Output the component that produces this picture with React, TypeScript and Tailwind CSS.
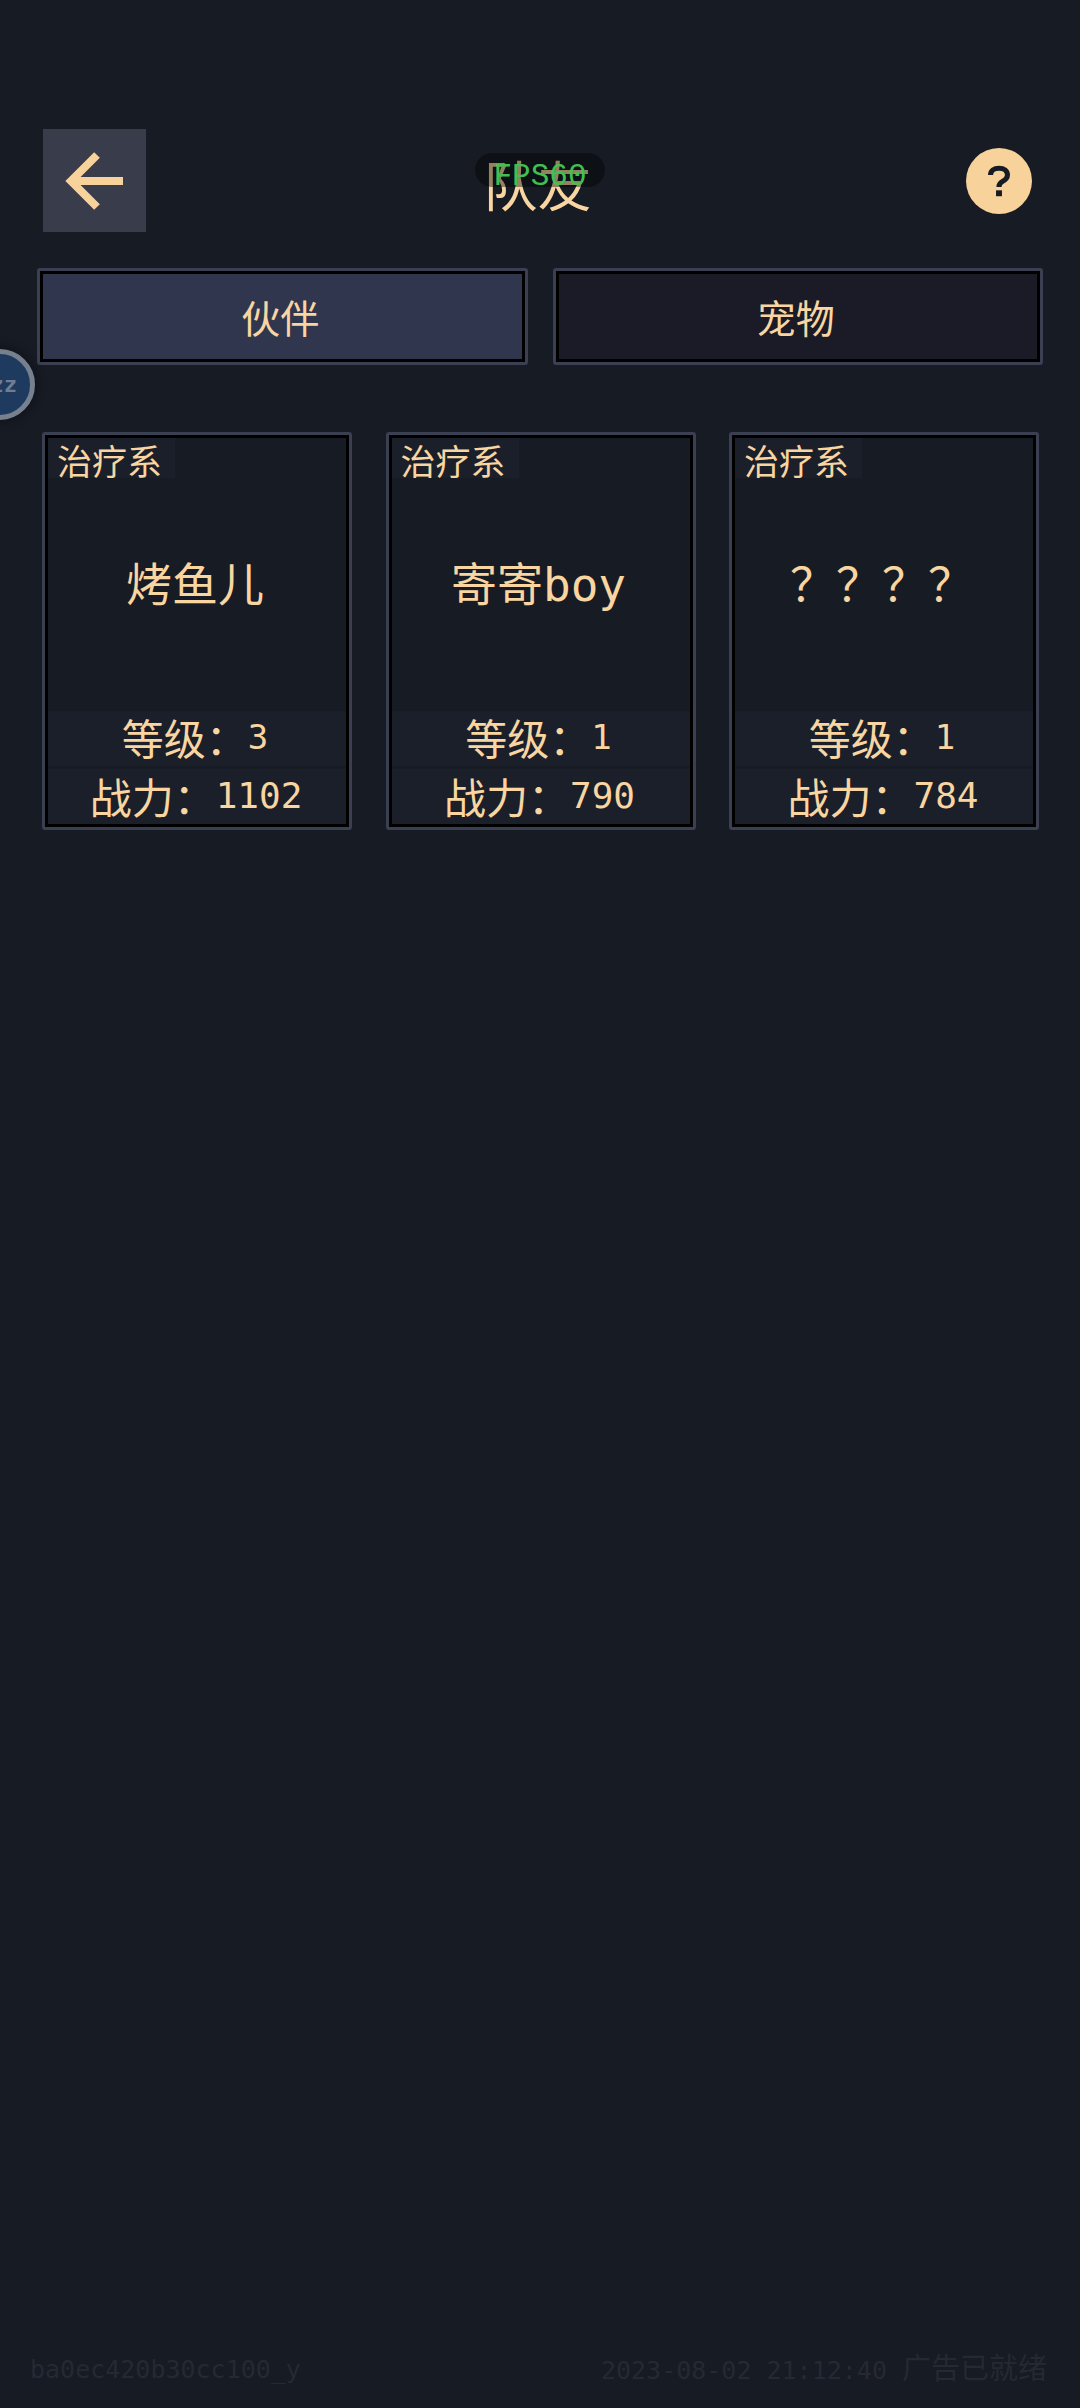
import React from 'react'

//Fonts
const cjk = 'font-["Noto_Sans_CJK_SC",sans-serif]'
const mono = 'font-["DejaVu_Sans_Mono","Noto_Sans_CJK_SC",monospace]'

//Data
interface Partner {
    name: string
    level: number
    power: number
}

const partners: Partner[] = [
    { name: '烤鱼儿', level: 3, power: 1102 },
    { name: '寄寄boy', level: 1, power: 790 },
    { name: '？？？？', level: 1, power: 784 },
]

const Tab = ({ label, active }: { label: string; active?: boolean }) => (
    <div className="h-[97px] flex-1 rounded-[3px] border-[3px] border-[#3a3f52]">
        <div
            className={`flex h-full items-center justify-center border-[3px] border-black pr-[4px] text-[39px] text-[#f8d5a1] ${
                active ? 'bg-[#31364f]' : 'bg-[#1a1b26]'
            }`}
        >
            {label}
        </div>
    </div>
)

const PartnerCard = ({ name, level, power }: Partner) => (
    <div className="h-[398px] w-[310px] rounded-[3px] border-[3px] border-[#3a3f52]">
        <div className="flex h-full flex-col border-[3px] border-black bg-[#171b24] text-[#f8d5a1]">
            <div className="flex h-[40px] w-[127px] items-start bg-[#1a1f29] pl-[9px] text-[35px] leading-[44px]">
                治疗系
            </div>
            <div className={`flex flex-1 items-center justify-center pr-[4px] pb-[20px] text-[46px] leading-none ${mono}`}>{name}</div>
            <div className="flex h-[55px] items-center justify-center pr-[4px] pb-[4px] text-[42px] leading-none bg-[#1a1f2a]">
                等级：<span className={`text-[34px] ${mono}`}>{level}</span>
            </div>
            <div className="mt-[3px] flex h-[55px] items-center justify-center pr-[2px] pb-[2px] text-[42px] leading-none bg-[#1a1f2a]">
                战力：<span className={`text-[36px] ${mono}`}>{power}</span>
            </div>
        </div>
    </div>
)

const App = () => {
    return (
        <div className={`relative flex min-h-[2408px] flex-col overflow-hidden bg-[#171b24] pt-[129px] ${cjk}`}>
            {/* Header */}
            <div className="grid grid-cols-[1fr_auto_1fr] items-center pr-[48px] pl-[43px]">
                <button className="flex h-[103px] w-[103px] items-center justify-center bg-[#383c4b]">
                    <svg width="60" height="58" viewBox="0 0 60 58" fill="none" stroke="#f8d29b" strokeWidth="8">
                        <path d="M58 29H6" />
                        <path d="M32 3 6 29l26 26" />
                    </svg>
                </button>
                <div className="pt-[6px] text-[54px] leading-none text-[#f8d5a1]">队友</div>
                <div className="flex justify-end">
                    <div className="flex h-[66px] w-[66px] items-center justify-center rounded-full bg-[#f8d29b]">
                        <svg width="22" height="34" viewBox="0 0 26 36" fill="none" stroke="#171b24" strokeWidth="6">
                            <path d="M3 11c0-5 4-8 10-8s10 3 10 8c0 4-3 6-6 7.500-3 1.500-4 3-4 6.500" />
                            <path d="M9.500 29h7v7h-7z" fill="#171b24" stroke="none" />
                        </svg>
                    </div>
                </div>
            </div>

            {/* FPS overlay */}
            <div className="absolute top-[153px] left-[475px] flex h-[34px] w-[130px] items-center justify-center rounded-full bg-black/40 pt-[12px] font-['Liberation_Mono',monospace] text-[31px] leading-none text-[#41c052]">
                FPS60
            </div>

            {/* Floating ball */}
            <div className="absolute top-[349px] left-[-36px] flex h-[71px] w-[71px] items-center justify-end rounded-full border-[5px] border-[#76808f] bg-[#1e3a5f] pr-[13px] font-['DejaVu_Sans_Mono',monospace] text-[22px] leading-none font-bold text-[#6f7d92] shadow-[0_0_8px_4px_rgba(0,0,0,0.25)]">
                zz
            </div>

            {/* Tabs */}
            <div className="mt-[36px] flex gap-[25px] px-[37px]">
                <Tab label="伙伴" active />
                <Tab label="宠物" />
            </div>

            {/* Cards */}
            <div className="mt-[67px] flex justify-between pr-[41px] pl-[42px]">
                {partners.map((p) => (
                    <PartnerCard key={p.name} {...p} />
                ))}
            </div>

            {/* Footer */}
            <div className={`mt-auto mb-[24px] flex items-center justify-between pr-[33px] pl-[30px] text-[25px] leading-none text-[#252932] ${mono}`}>
                <span>ba0ec420b30cc100_y</span>
                <span>
                    2023-08-02 21:12:40 <span className="text-[29px]">广告已就绪</span>
                </span>
            </div>
        </div>
    )
}

export default App
